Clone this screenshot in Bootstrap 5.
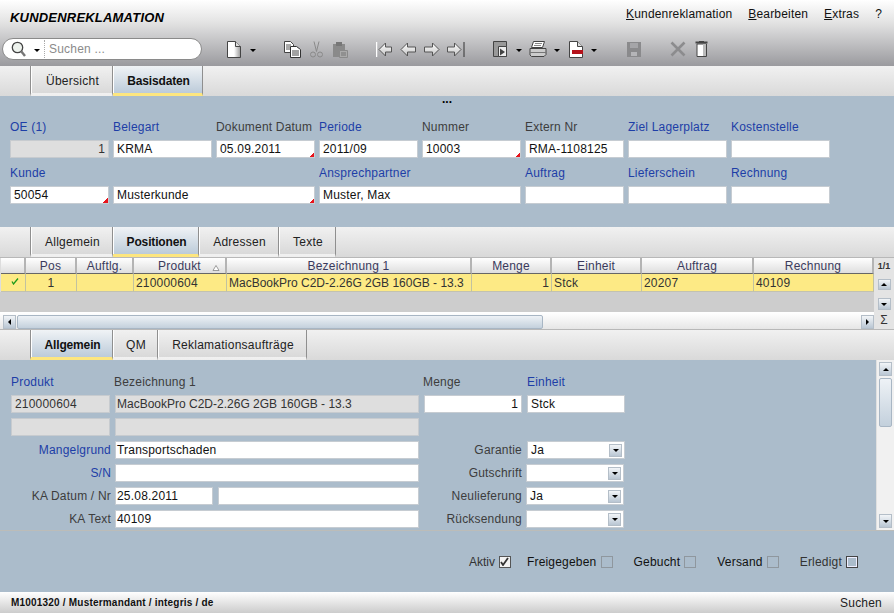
<!DOCTYPE html>
<html lang="de"><head><meta charset="utf-8"><title>Kundenreklamation</title>
<link href="https://cdn.jsdelivr.net/npm/bootstrap@5.3.0/dist/css/bootstrap.min.css" rel="stylesheet">
<style>
html,body{height:100%;overflow:hidden}
body{width:894px;height:613px;background:#abbccb;font:12px/14px "Liberation Sans",Arial,sans-serif;letter-spacing:.2px;color:#222}
svg{display:block;flex:none}
.hdr{height:66px;background:linear-gradient(#fff 0,#e2e2e2 35%,#c4c4c6 62%,#9a9a9e 100%)}
.title-row{height:38px;padding:10px 12px 0 10px}
.title{font-weight:700;font-style:italic;color:#000;letter-spacing:.2px;margin:0;font-size:13px;line-height:15px}
.menu{gap:16px;margin-top:-3px;letter-spacing:.17px}
.menu a{color:#111;text-decoration:none}
.tools{height:22px;padding-left:2px}
.search{width:200px;height:22px;border-radius:11px;border:1px solid #8a8a8a;background:#fff;color:#8b8b8b;padding-left:8px}
.search .sep{width:1px;height:18px;border-left:1px dotted #aaa;margin:0 4px 0 4px}
.caret{width:0;height:0;border:3px solid transparent;border-top:3px solid #000;border-bottom:0;flex:none;margin-top:3px}
.tabs{height:30px;background:linear-gradient(#f1f1f1,#d9d9d9);padding-left:30px;flex-wrap:nowrap}
.tabs .nav-link{height:30px;padding:3px 0 0 2px;border-radius:0;color:#222;border-right:1px solid #8f8f8f;display:flex;align-items:center;justify-content:center;background:linear-gradient(#f1f1f1,#d9d9d9);border-bottom:3px solid transparent;box-shadow:inset 1px 0 0 #fff;letter-spacing:.25px}
.tabs .nav-item:first-child .nav-link{border-left:1px solid #8f8f8f}
.tabs .nav-link.active{font-weight:700;color:#111;background:linear-gradient(#f0f3f6,#bccbd9);border-bottom-color:#fde67f;letter-spacing:-.15px}
.w83{width:83px}.w90{width:90px}.w86{width:86px}.w80{width:80px}.w57{width:57px}.w45{width:45px}.w149{width:149px}
.top{height:131px;padding:0 0 0 10px}
.dots{height:10px;line-height:6px;font-weight:700;padding-right:10px;color:#000;letter-spacing:0}
.form8{display:grid;grid-template-columns:repeat(8,99px);column-gap:4px;grid-auto-rows:23px;margin-top:10px}
.form8 label,.lab{display:flex;align-items:center;margin:0;white-space:nowrap;color:#3d3d3d}
.form8 label{padding-bottom:1px}
.lab{padding-bottom:3px}
.lab.hd{padding-bottom:1px}
.lnk{color:#1d3ea7!important}
.span2{grid-column:span 2}
.fld.form-control{height:18px;min-height:0;margin-top:1px;padding:0 3px;font:inherit;line-height:16px;letter-spacing:inherit;border:1px solid #c6ccd2;border-radius:0;background-color:#fff;color:#111;white-space:nowrap;overflow:hidden}
.fld.form-control.p1{padding-left:1px}
.fld.ro{background:#dedede;border-color:#c7cbcf;color:#333}
.fld.num{text-align:right}
.req{background:linear-gradient(135deg,transparent 50%,#e8141c 50%) no-repeat right bottom/5px 5px,#fff!important}
.tight{letter-spacing:0}
.fld.form-control.tight{letter-spacing:0}
.grid-wrap{height:73px;background:#ddd;border-top:1px solid #b8b8b8;border-bottom:1px solid #b8b8b8}
.grid-main{width:874px}
.grid-main .table{table-layout:fixed;width:873px;margin:0 0 0 1px;--bs-table-bg:transparent;border-collapse:separate;border-spacing:0}
.table th{height:16px;padding:1px 0 0;font-weight:400;line-height:14px;text-align:center;color:#3a3a5c;background:linear-gradient(#fff,#dedede);border-bottom:1px solid #666;border-right:2px solid #b4b4b4;position:relative}
.table td{height:18px;padding:1px 2px 0;line-height:16px;background:#fdea85;color:#333;border-bottom:1px solid #c2c2b0;border-right:1px solid #c2c2a0;overflow:hidden;white-space:nowrap}
.table td.tight{letter-spacing:0}
.sort{position:absolute;right:5px;top:7px}
.tick{margin:3px 0 0 8px}
.c1{width:25px}.c2{width:51px}.c3{width:57px}.c4{width:93px}.c5{width:245px}.c6{width:80px}.c7{width:90px}.c8{width:112px}.c9{width:120px}
.gray{height:21px;background:#cdcdcd}
.hs{height:17px;background:linear-gradient(#fff,#e6e6e6);padding:1px 0 0 3px;border-top:1px solid #fff}
.sb{width:13px;height:14px;background:linear-gradient(#f2f5f8,#b9c6d3);border:1px solid #b4bec8;display:flex;align-items:center;justify-content:center}
.thumb{background:linear-gradient(#eef2f6,#c3d0dc);border:1px solid #a8b6c4;border-radius:2px}
.h-thumb{width:526px;height:14px;margin-left:1px}
.side{width:20px;background:#e4e4e4;font-size:9px;letter-spacing:0;font-weight:700;line-height:12px;padding-top:2px;color:#333}
.ua{border-top:3px solid transparent;border-left:3px solid transparent;border-right:3px solid transparent;width:0;height:0}
.ua.u{border-top:0;border-bottom:3px solid #000}.ua.d{border-bottom:0;border-top:3px solid #000}.ua.l{border:3px solid transparent;border-left:0;border-right:3px solid #000}.ua.r{border:3px solid transparent;border-right:0;border-left:3px solid #000}
.side .up{margin-top:7px;height:11px}.side .dn{margin-top:8px;height:12px}
.sigma{margin-top:3px;font-size:12px;font-weight:400;line-height:14px}
.detail{height:171px;border-bottom:1px solid #bcbcb8}
.dform{width:876px;padding:11px 0 0 11px;display:grid;grid-template-columns:99px 304px 98px 98px;column-gap:5px;grid-auto-rows:23px}
.dform .lab.r{justify-content:flex-end;margin-right:-1px}
.dform .lab.r0{justify-content:flex-end}
.dform .lab.s{margin-left:-1px}
.two{display:flex;gap:5px}
.two .a{width:98px}.two .b{flex:1}
.sel{display:flex;align-items:center;justify-content:space-between;padding-right:1px!important}
.sel .sb{width:13px;height:13px;margin-right:1px}
.sel.x{margin-left:-1px}
.vs{width:18px;background:#f1f1f1;padding:2px 0 2px 2px;border-left:1px solid #e0e0e0}
.vs .thumb{height:49px;width:13px;margin-top:2px}
.checks{height:61px;padding-right:36px;color:#333}
.chk{width:12px;height:12px;border:1px solid #555;background:#f2f2f2;margin-left:4px;flex:none;display:flex;align-items:center;justify-content:center}
.chk.off{background:transparent;border-color:#8f979e}
.chk.w{background:transparent;border-color:#444;box-shadow:inset 0 0 0 1px #eef}
.dk{color:#111}
.status{height:21px;background:linear-gradient(#fff,#ccc);padding:0 12px 0 11px}
.status b{font-size:10px;letter-spacing:.2px;color:#111}
.g1{margin-left:25px}.g4{margin-left:21px}.g3{margin-left:16px}
.m7{margin-left:7px}.m8{margin-left:8px}.m9{margin-left:9px}.m28{margin-left:28px}.m29{margin-left:29px}.m30{margin-left:30px}
</style></head><body>
<div class="d-flex flex-column h-100">
<header class="hdr">
 <div class="title-row d-flex justify-content-between align-items-start">
  <h1 class="title">KUNDENREKLAMATION</h1>
  <nav class="menu d-flex"><a href="#"><u>K</u>undenreklamation</a><a href="#"><u>B</u>earbeiten</a><a href="#"><u>E</u>xtras</a><a href="#">?</a></nav>
 </div>
 <div class="tools d-flex align-items-center">
  <div class="search d-flex align-items-center">
   <svg width="15" height="16" viewBox="0 0 15 16"><circle cx="6.500" cy="6.500" r="5.200" fill="#eef3ee" stroke="#444" stroke-width="1.300"/><path d="M10 10l4 5" stroke="#777" stroke-width="2.400"/></svg>
   <span class="caret m8"></span><span class="sep"></span><span>Suchen ...</span>
  </div>
  <svg class="g1" width="14" height="17" viewBox="0 0 14 17"><defs><linearGradient id="g"><stop offset="0" stop-color="#fff"/><stop offset=".5" stop-color="#fff"/><stop offset="1" stop-color="#999"/></linearGradient><linearGradient id="a" x2="0" y2="1"><stop offset="0" stop-color="#fff"/><stop offset="1" stop-color="#c4c4c4"/></linearGradient></defs><path d="M.5.5h8l5 5v11H.5z" fill="url(#g)" stroke="#444"/><path d="M8.500.5v5h5" fill="#ddd" stroke="#444"/></svg>
  <span class="caret m9"></span>
  <svg class="m28" width="17" height="17" viewBox="0 0 17 17"><path d="M.5.5h6l3 3v8H.5z" fill="#fff" stroke="#444"/><path d="M2 4h5M2 6h4M2 8h4" stroke="#555"/><path d="M6.500 5.500h6l4 3v8h-10z" fill="#fff" stroke="#333"/><path d="M8 10h7M8 12h7M8 14h7" stroke="#444"/></svg>
  <svg class="m9" width="13" height="17" viewBox="0 0 13 17" fill="none" stroke="#8a8a8a"><path d="M4 .5l2.500 10M9 .5L6.500 10.500"/><circle cx="3" cy="13.500" r="2.500"/><circle cx="10" cy="13.500" r="2.500"/></svg>
  <svg class="m9" width="16" height="17" viewBox="0 0 16 17"><path d="M1 3h12v13H1z" fill="#8a8a8a"/><path d="M4 1h6v4H4z" fill="#777"/><path d="M7.500 9.500h8v7h-8z" fill="#aaa" stroke="#8a8a8a"/><path d="M9 12h5M9 14h5" stroke="#777"/></svg>
  <svg class="m28" width="16" height="17" viewBox="0 0 16 17"><path d="M.5 1v15" stroke="#fff" stroke-width="1.500"/><path d="M3 8.500l6.500-6.500v4h6v5h-6v4z" fill="url(#a)" stroke="#555"/></svg>
  <svg class="m8" width="16" height="17" viewBox="0 0 16 17"><path d="M1 8.500l6.500-6.500v4h8v5h-8v4z" fill="url(#a)" stroke="#555"/></svg>
  <svg class="m8" width="16" height="17" viewBox="0 0 16 17"><path d="M15 8.500L8.500 2v4H.5v5h8v4z" fill="url(#a)" stroke="#555"/></svg>
  <svg class="m7" width="18" height="17" viewBox="0 0 18 17"><path d="M14 8.500L7.500 2v4H.5v5h7v4z" fill="url(#a)" stroke="#555"/><path d="M17 1v15" stroke="#333"/></svg>
  <svg class="m28" width="14" height="16" viewBox="0 0 14 16"><path d="M.5.5h13v15H.5z" fill="#999" stroke="#444"/><path d="M5.500 5.500h8v10h-8z" fill="#eee" stroke="#444"/><path d="M7 7.500l5 3.500-5 3.500z" fill="#444"/></svg>
  <span class="caret m9"></span>
  <svg class="m7" width="18" height="17" viewBox="0 0 18 17"><path d="M4.500.5h11l-2 6h-11z" fill="#fff" stroke="#444"/><path d="M6 2.500h7M5 4.500h7" stroke="#888"/><path d="M1 7.500h16v6l-2 2H2.500L1 14z" fill="#ccc" stroke="#444"/><path d="M1 11.500h16" stroke="#777"/></svg>
  <span class="caret m7"></span>
  <svg class="m9" width="14" height="17" viewBox="0 0 14 17"><path d="M.5.500h8l5 5v11H.5z" fill="#fff" stroke="#444"/><path d="M8.500.500v5h5" fill="#ddd" stroke="#444"/><path d="M3 9h11v4H3z" fill="#b5121b"/></svg>
  <span class="caret m8"></span>
  <svg class="m30" width="14" height="15" viewBox="0 0 14 15"><path d="M0 0h14v15H0z" fill="#8a8a8c"/><path d="M3 1h8v5H3z" fill="#a5a5a8"/><path d="M4 10h6v4H4z" fill="#b5b5b8"/></svg>
  <svg class="m29" width="16" height="16" viewBox="0 0 16 16"><path d="M1.500 1.500l13 13M14.500 1.500l-13 13" stroke="#8c8c8e" stroke-width="2.600"/></svg>
  <svg class="m9" width="13" height="16" viewBox="0 0 13 16"><path d="M.5 1.500h12" stroke="#444" stroke-width="2"/><path d="M4 .5h5" stroke="#444"/><path d="M2 3h9.500v12.500H2z" fill="#fff" stroke="#444"/><path d="M8 3h3v12H8z" fill="#bbb"/></svg>
 </div>
</header>

<ul class="nav tabs">
 <li class="nav-item"><a class="nav-link w83" href="#">Übersicht</a></li>
 <li class="nav-item"><a class="nav-link active w90" href="#">Basisdaten</a></li>
</ul>

<section class="top">
 <div class="dots d-flex justify-content-center">...</div>
 <div class="form8">
  <label class="lnk">OE (1)</label><label class="lnk">Belegart</label><label>Dokument Datum</label><label class="lnk">Periode</label><label>Nummer</label><label>Extern Nr</label><label class="lnk">Ziel Lagerplatz</label><label class="lnk">Kostenstelle</label>
  <div class="form-control fld ro num">1</div><div class="form-control fld">KRMA</div><div class="form-control fld req">05.09.2011</div><div class="form-control fld">2011/09</div><div class="form-control fld req">10003</div><div class="form-control fld">RMA-1108125</div><div class="form-control fld"></div><div class="form-control fld"></div>
  <label class="lnk">Kunde</label><label></label><label></label><label class="lnk">Ansprechpartner</label><label></label><label class="lnk">Auftrag</label><label class="lnk">Lieferschein</label><label class="lnk">Rechnung</label>
  <div class="form-control fld req">50054</div><div class="form-control fld req span2">Musterkunde</div><div class="form-control fld span2">Muster, Max</div><div class="form-control fld"></div><div class="form-control fld"></div><div class="form-control fld"></div>
 </div>
</section>

<ul class="nav tabs">
 <li class="nav-item"><a class="nav-link w83" href="#">Allgemein</a></li>
 <li class="nav-item"><a class="nav-link active w86" href="#">Positionen</a></li>
 <li class="nav-item"><a class="nav-link w80" href="#">Adressen</a></li>
 <li class="nav-item"><a class="nav-link w57" href="#">Texte</a></li>
</ul>

<section class="grid-wrap d-flex">
 <div class="grid-main d-flex flex-column">
  <table class="table">
   <colgroup><col class="c1"><col class="c2"><col class="c3"><col class="c4"><col class="c5"><col class="c6"><col class="c7"><col class="c8"><col class="c9"></colgroup>
   <thead><tr><th></th><th>Pos</th><th>Auftlg.</th><th>Produkt<svg class="sort" width="8" height="6" viewBox="0 0 8 6"><path d="M4 .5L1 5.500h6z" fill="#fff" stroke="#777" stroke-width=".7"/></svg></th><th>Bezeichnung 1</th><th>Menge</th><th>Einheit</th><th>Auftrag</th><th>Rechnung</th></tr></thead>
   <tbody><tr><td><svg class="tick" width="8" height="7" viewBox="0 0 8 7"><path d="M1 3.500L2.500 6 7 .5" fill="none" stroke="#1c9a1c" stroke-width="1.300"/></svg></td><td class="text-center">1</td><td></td><td>210000604</td><td class="tight">MacBookPro C2D-2.26G 2GB 160GB - 13.3</td><td class="text-end">1</td><td>Stck</td><td>20207</td><td>40109</td></tr></tbody>
  </table>
  <div class="gray"></div>
  <div class="hs d-flex align-items-center">
   <span class="sb"><i class="ua l"></i></span><span class="thumb h-thumb"></span>
   <span class="sb ms-auto"><i class="ua r"></i></span>
  </div>
 </div>
 <aside class="side d-flex flex-column align-items-center">
  <span>1/1</span>
  <span class="sb up"><i class="ua u"></i></span>
  <span class="sb dn"><i class="ua d"></i></span>
  <span class="sigma">Σ</span>
 </aside>
</section>

<ul class="nav tabs">
 <li class="nav-item"><a class="nav-link active w83" href="#">Allgemein</a></li>
 <li class="nav-item"><a class="nav-link w45" href="#">QM</a></li>
 <li class="nav-item"><a class="nav-link w149" href="#">Reklamationsaufträge</a></li>
</ul>

<section class="detail d-flex justify-content-between">
 <div class="dform">
  <span class="lab hd lnk">Produkt</span><span class="lab hd s">Bezeichnung 1</span><span class="lab hd s">Menge</span><span class="lab hd lnk">Einheit</span>
  <div class="form-control fld ro">210000604</div><div class="form-control fld ro p1 tight">MacBookPro C2D-2.26G 2GB 160GB - 13.3</div><div class="form-control fld num">1</div><div class="form-control fld">Stck</div>
  <div class="form-control fld ro"></div><div class="form-control fld ro"></div><span></span><span></span>
  <span class="lab r lnk">Mangelgrund</span><div class="form-control fld p1">Transportschaden</div><span class="lab r0">Garantie</span><div class="form-control fld sel">Ja<span class="sb"><i class="ua d"></i></span></div>
  <span class="lab r lnk">S/N</span><div class="form-control fld"></div><span class="lab r0">Gutschrift</span><div class="form-control fld sel x"><span></span><span class="sb"><i class="ua d"></i></span></div>
  <span class="lab r">KA Datum / Nr</span><div class="two"><div class="form-control fld a p1">25.08.2011</div><div class="form-control fld b"></div></div><span class="lab r0">Neulieferung</span><div class="form-control fld sel x">Ja<span class="sb"><i class="ua d"></i></span></div>
  <span class="lab r">KA Text</span><div class="form-control fld p1">40109</div><span class="lab r0">Rücksendung</span><div class="form-control fld sel x"><span></span><span class="sb"><i class="ua d"></i></span></div>
 </div>
 <aside class="vs d-flex flex-column">
  <span class="sb"><i class="ua u"></i></span><span class="thumb"></span>
  <span class="sb mt-auto"><i class="ua d"></i></span>
 </aside>
</section>

<section class="checks d-flex align-items-center justify-content-end">
 <span class="tight">Aktiv</span><span class="chk"><svg width="9" height="9" viewBox="0 0 9 9"><path d="M1 5l2 3 5-7" fill="none" stroke="#333" stroke-width="1.800"/></svg></span>
 <span class="g3 dk">Freigegeben</span><span class="chk off"></span>
 <span class="g4 dk">Gebucht</span><span class="chk off"></span>
 <span class="g4 dk">Versand</span><span class="chk off"></span>
 <span class="g4">Erledigt</span><span class="chk w"></span>
</section>

<footer class="status d-flex align-items-center justify-content-between"><b>M1001320 / Mustermandant / integris / de</b><span>Suchen</span></footer>
</div>
</body></html>
